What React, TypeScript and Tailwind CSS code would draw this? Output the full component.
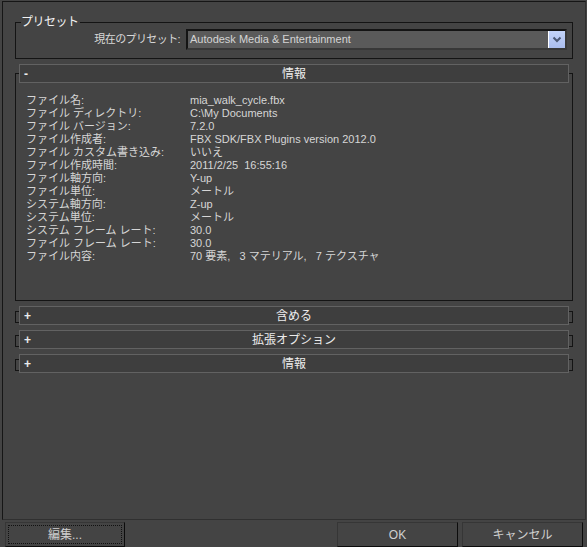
const rows: [string, string][] = [
  ["ファイル名:", "mia_walk_cycle.fbx"],
  ["ファイル ディレクトリ:", "C:\\My Documents"],
  ["ファイル バージョン:", "7.2.0"],
  ["ファイル作成者:", "FBX SDK/FBX Plugins version 2012.0"],
  ["ファイル カスタム書き込み:", "いいえ"],
  ["ファイル作成時間:", "2011/2/25  16:55:16"],
  ["ファイル軸方向:", "Y-up"],
  ["ファイル単位:", "メートル"],
  ["システム軸方向:", "Z-up"],
  ["システム単位:", "メートル"],
  ["システム フレーム レート:", "30.0"],
  ["ファイル フレーム レート:", "30.0"],
  ["ファイル内容:", "70 要素,   3 マテリアル,   7 テクスチャ"],
];

export default function App() {
  return (
    <div className="flex h-[547px] w-[587px] flex-col overflow-hidden bg-[#444444] font-['Liberation_Sans','Noto_Sans_CJK_JP',sans-serif] text-[11px] text-[#d6d6d6]">
      <div className="ml-[2px] mt-[1px] h-[519px] w-[584px] shrink-0 border-t border-l border-b border-r border-t-[#161616] border-l-[#161616] border-b-[#303030] border-r-[#303030]">
        {/* プリセット */}
        <div className="relative ml-[12px] mt-[20px] h-[37px] w-[558px] border border-[#141414]">
          <span className="absolute -top-[8px] left-[5px] bg-[#444444] pr-[1px] text-[12px] leading-[14px] text-[#f2f2f2] tracking-[-0.5px]">
            プリセット
          </span>
          <div className="flex items-center justify-end gap-[6px] pr-[5px] pt-[6px]">
            <span className="text-[11px] tracking-[-0.6px] text-[#d8d8d8]">現在のプリセット:</span>
            <div className="flex h-[21px] w-[381px] border-2 border-t-[#141414] border-l-[#141414] border-b-[#383838] border-r-[#383838] bg-[#5a5a5a]">
              <span className="flex-1 pl-[2px] text-[11px] leading-[17px] text-[#d4d4d4]">
                Autodesk Media &amp; Entertainment
              </span>
              <span className="flex w-[17px] items-center justify-center border-l border-l-white bg-gradient-to-b from-[#c3d3f8] to-[#aabdee]">
                <svg width="10" height="7" viewBox="0 0 10 7">
                  <path d="M1.5 1.5 L5 5 L8.5 1.5" fill="none" stroke="#4b5874" strokeWidth="2" />
                </svg>
              </span>
            </div>
          </div>
        </div>

        {/* 情報 (展開) */}
        <div className="ml-[12px] mt-[14px] h-[228px] w-[558px] border border-[#141414]">
          <RolloutHeader sign="-" title="情報" className="-mt-[10px]" />
          <div className="pl-[10px] pt-[11px]">
            {rows.map(([k, v]) => (
              <div key={k} className="flex h-[13px] items-center leading-[13px]">
                <span className="w-[164px] shrink-0 whitespace-pre">{k}</span>
                <span className="whitespace-pre">{v}</span>
              </div>
            ))}
          </div>
        </div>

        <Collapsed title="含める" className="mt-[10px]" />
        <Collapsed title="拡張オプション" className="mt-[12px]" />
        <Collapsed title="情報" className="mt-[12px]" />
      </div>

      <div className="mt-[2px] flex h-[25px] shrink-0 pl-[5px]">
        <button className="flex w-[120px] border border-t-[#363636] border-l-[#363636] border-b-[#0c0c0c] border-r-[#0c0c0c] bg-[#444444] p-[2px]">
          <span className="flex flex-1 items-center justify-center border border-dotted border-[#111111] text-[12px] text-[#cfcfcf]">
            編集...
          </span>
        </button>
        <button className="ml-[212px] flex w-[121px] items-center justify-center border border-t-[#363636] border-l-[#363636] border-b-[#0c0c0c] border-r-[#0c0c0c] bg-[#444444] text-[12px] text-[#cfcfcf]">
          OK
        </button>
        <button className="ml-[4px] flex w-[121px] items-center justify-center border border-t-[#363636] border-l-[#363636] border-b-[#0c0c0c] border-r-[#0c0c0c] bg-[#444444] text-[12px] text-[#cfcfcf]">
          キャンセル
        </button>
      </div>
    </div>
  );
}

function RolloutHeader({
  sign,
  title,
  className,
}: {
  sign: string;
  title: string;
  className?: string;
}) {
  return (
    <div
      className={`relative mx-[3px] flex h-[19px] items-center border border-[#626262] bg-[#3e3e3e] text-[12px] text-[#ececec] ${className ?? ""}`}
    >
      <span className="w-[16px] pl-[4px] font-bold">{sign}</span>
      <span className="flex-1 text-center">{title}</span>
      <span className="w-[16px]" />
    </div>
  );
}

function Collapsed({ title, className }: { title: string; className?: string }) {
  return (
    <div className={`ml-[12px] h-[12px] w-[558px] border border-[#141414] ${className ?? ""}`}>
      <RolloutHeader sign="+" title={title} className="-mt-[6px]" />
    </div>
  );
}
